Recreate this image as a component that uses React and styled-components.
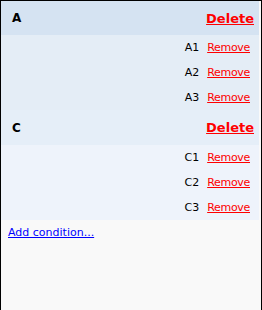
import styled, { createGlobalStyle } from "styled-components";

const GlobalStyle = createGlobalStyle`
  html, body {
    margin: 0;
    padding: 0;
    background: #f9f9f9;
  }
  body {
    font-family: "DejaVu Sans", Verdana, sans-serif;
    font-size: 11px;
  }
`;

const Frame = styled.div`
  box-sizing: border-box;
  width: 262px;
  height: 310px;
  border: 1px solid #000;
  border-bottom: none;
  background: #f9f9f9;
`;

const List = styled.div`
  margin-right: 2px;
`;

const Header = styled.div`
  display: flex;
  align-items: center;
  justify-content: space-between;
  height: ${(p) => p.height}px;
  padding: 0 5px 0 11px;
  background: ${(p) => p.bg};
`;

const Title = styled.span`
  font-weight: bold;
  font-size: 12px;
  color: #000;
`;

const DeleteLink = styled.a`
  font-family: Verdana, "DejaVu Sans", sans-serif;
  font-weight: bold;
  font-size: 13px;
  color: #f00;
  text-decoration: underline;
  cursor: pointer;
`;

const Items = styled.div`
  background: ${(p) => p.bg};
`;

const Row = styled.div`
  display: flex;
  justify-content: flex-end;
  align-items: center;
  gap: 8px;
  height: 25px;
  padding-right: 9px;
`;

const ItemLabel = styled.span`
  color: #000;
`;

const RemoveLink = styled.a`
  color: #f00;
  text-decoration: underline;
  letter-spacing: -0.3px;
  cursor: pointer;
`;

const AddLink = styled.a`
  display: inline-block;
  margin: 6px 0 0 7px;
  color: #00f;
  text-decoration: underline;
  cursor: pointer;
`;

const groups = [
  {
    name: "A",
    items: ["A1", "A2", "A3"],
    headerHeight: 34,
    headerBg: "#d5e3f2",
    itemsBg: "#e4edf6",
  },
  {
    name: "C",
    items: ["C1", "C2", "C3"],
    headerHeight: 35,
    headerBg: "#e5eef8",
    itemsBg: "#eef3fb",
  },
];

const App = () => {
  return (
    <>
      <GlobalStyle />
      <Frame>
        <List>
          {groups.map((g) => (
            <div key={g.name}>
              <Header height={g.headerHeight} bg={g.headerBg}>
                <Title>{g.name}</Title>
                <DeleteLink>Delete</DeleteLink>
              </Header>
              <Items bg={g.itemsBg}>
                {g.items.map((item) => (
                  <Row key={item}>
                    <ItemLabel>{item}</ItemLabel>
                    <RemoveLink>Remove</RemoveLink>
                  </Row>
                ))}
              </Items>
            </div>
          ))}
        </List>
        <AddLink>Add condition...</AddLink>
      </Frame>
    </>
  );
};

export default App;
